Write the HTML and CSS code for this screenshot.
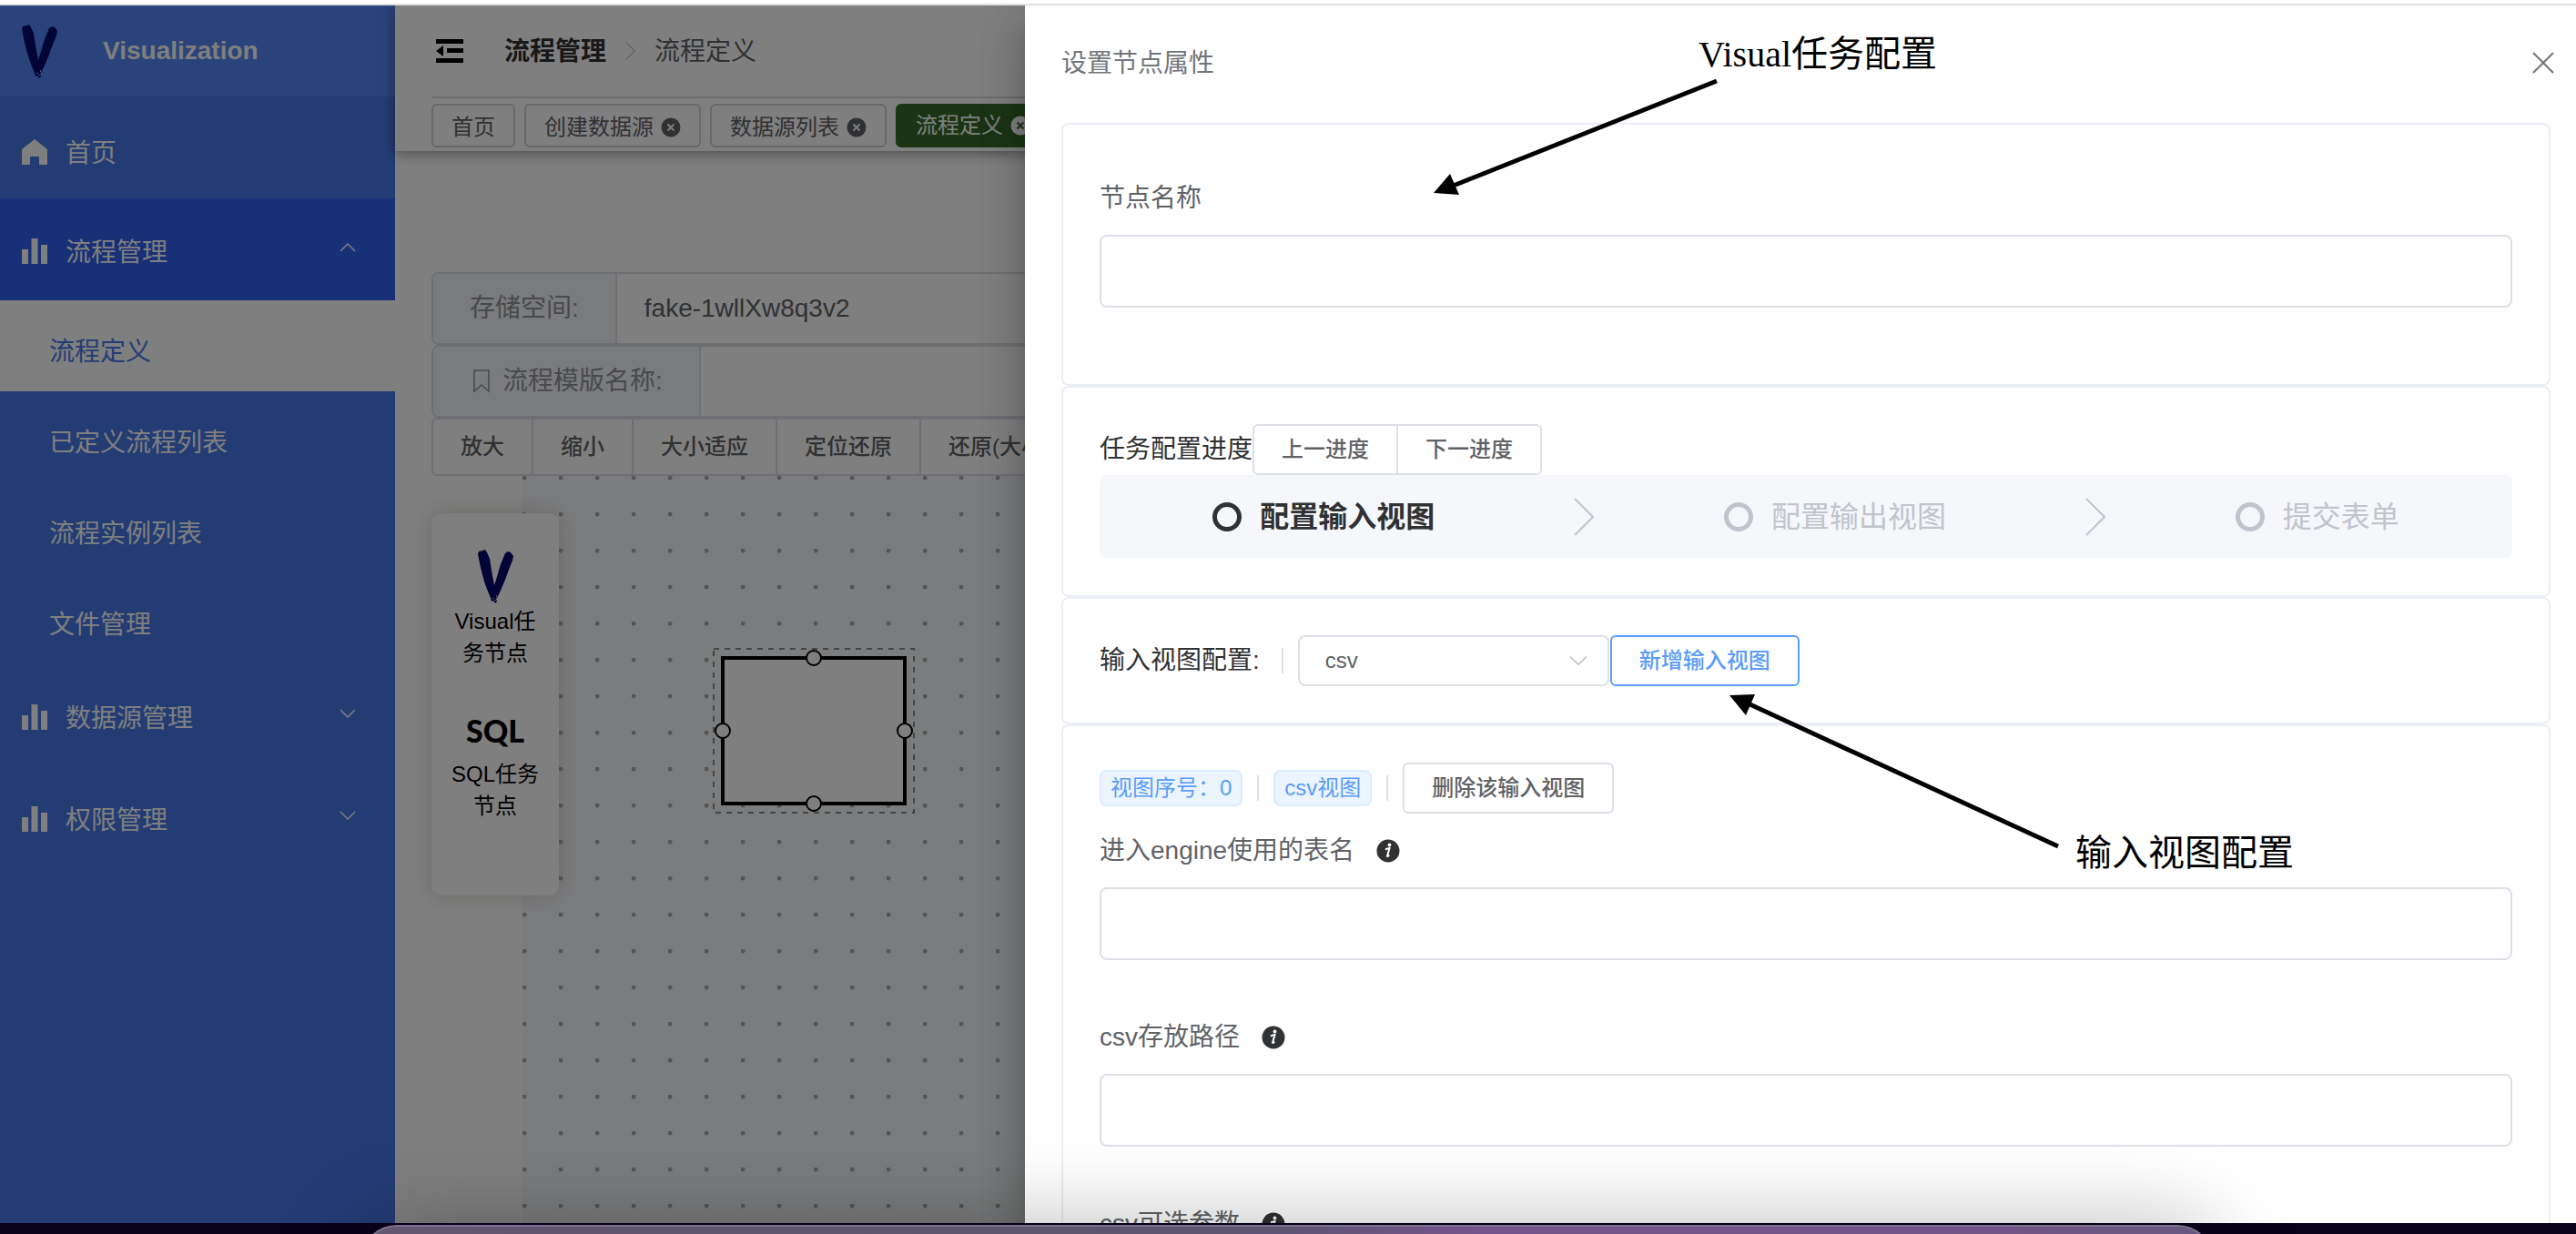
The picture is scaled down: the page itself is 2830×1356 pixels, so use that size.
FILE: index.html
```html
<!DOCTYPE html>
<html lang="zh-CN">
<head>
<meta charset="utf-8">
<title>Visualization</title>
<link rel="stylesheet" href="styles.css">
</head>
<body>
<svg class="sprite" aria-hidden="true">
  <symbol id="logo" viewBox="0 0 39 59"><path d="M0 5 1 2 5 1 8 0 10 3 13 10 15 23 18 39 20 33 25 16 30 4 33 2 36 3 39 7 38 12 34 22 30 33 25 45 22 51 20 54 21 57 19 59 17 56 15 57 14 53 11 46 7 35 3 20Z"/><path d="M16 53h2v1h-2zM20 50h1v2h-1zM18 55h2v1h-2z" fill="#fff" opacity=".6"/></symbol>
  <symbol id="bars" viewBox="0 0 28 28"><path d="M0 12h7v16H0zM10.500 0h7v28h-7zM21 7h7v21h-7z"/></symbol>
  <symbol id="up" viewBox="0 0 18 10"><path d="M1 9 9 1l8 8" fill="none" stroke="currentColor" stroke-width="1.500"/></symbol>
  <symbol id="down" viewBox="0 0 18 10"><path d="M1 1l8 8 8-8" fill="none" stroke="currentColor" stroke-width="1.500"/></symbol>
  <symbol id="next" viewBox="0 0 22 42"><path d="M1 1 21 21 1 41" fill="none" stroke="currentColor" stroke-width="2"/></symbol>
  <symbol id="clear" viewBox="0 0 22 22"><circle cx="11" cy="11" r="10.500" fill="currentColor"/><path d="M7.500 7.500l7 7M14.500 7.500l-7 7" stroke="var(--mark)" stroke-width="2"/></symbol>
  <symbol id="info" viewBox="0 0 26 26"><circle cx="13" cy="13" r="12.500" fill="#303133"/><circle cx="14.500" cy="6.500" r="1.900" fill="#fff"/><path d="M10 11.500c2-1 3.500-1.500 4.500-1.500l-2.300 8.300c-.3 1.300.6 1 2-.8" fill="none" stroke="#fff" stroke-width="2"/></symbol>
</svg>

<div class="screen">
<div class="window">
  <div class="app">
    <nav class="sidebar">
      <div class="brand"><svg class="logo"><use href="#logo"/></svg><span>Visualization</span></div>
      <a class="item home" href="#"><svg class="icon" viewBox="0 0 28 28"><path d="M14 0 28 11v17h-9v-9h-10v9H0V11z"/></svg><span>首页</span></a>
      <a class="item open" href="#"><svg class="icon"><use href="#bars"/></svg><span>流程管理</span><svg class="fold"><use href="#up"/></svg></a>
      <a class="sub current" href="#">流程定义</a>
      <a class="sub" href="#">已定义流程列表</a>
      <a class="sub" href="#">流程实例列表</a>
      <a class="sub" href="#">文件管理</a>
      <a class="item" href="#"><svg class="icon"><use href="#bars"/></svg><span>数据源管理</span><svg class="fold"><use href="#down"/></svg></a>
      <a class="item" href="#"><svg class="icon"><use href="#bars"/></svg><span>权限管理</span><svg class="fold"><use href="#down"/></svg></a>
    </nav>

    <main class="main">
      <header class="navbar">
        <div class="crumbs">
          <button class="toggle" aria-label="收起菜单"><svg viewBox="0 0 30 26"><path d="M0 0h30v5H0zM12 10h18v5H12zM0 21h30v5H0zM0 13 8 7v12z"/></svg></button>
          <a class="parent" href="#">流程管理</a>
          <svg class="crumb-sep"><use href="#next"/></svg>
          <span>流程定义</span>
        </div>
        <div class="tabs">
          <a class="tab" href="#">首页</a>
          <a class="tab" href="#">创建数据源<svg><use href="#clear"/></svg></a>
          <a class="tab" href="#">数据源列表<svg><use href="#clear"/></svg></a>
          <a class="tab active" href="#">流程定义<svg><use href="#clear"/></svg></a>
        </div>
      </header>

      <div class="tools">
        <div class="group"><label for="space">存储空间:</label><input id="space" type="text" value="fake-1wllXw8q3v2"></div>
        <div class="group"><label for="tpl"><svg viewBox="0 0 18 26"><path d="M1 1h16v23l-8-7-8 7z" fill="none" stroke="currentColor" stroke-width="1.500"/></svg>流程模版名称:</label><input id="tpl" type="text"></div>
        <div class="buttons large"><button>放大</button><button>缩小</button><button>大小适应</button><button>定位还原</button><button>还原(大小&amp;定位)</button></div>
      </div>

      <div class="board">
        <div class="canvas">
          <svg class="node" width="224" height="184" viewBox="0 0 224 184">
            <rect x="2" y="2" width="220" height="180" fill="none" stroke="#888" stroke-width="2" stroke-dasharray="6 6"/>
            <rect x="12" y="12" width="200" height="160" fill="#fff" stroke="#000" stroke-width="4"/>
            <g fill="#fff" stroke="#000" stroke-width="2"><circle cx="112" cy="12" r="8"/><circle cx="212" cy="92" r="8"/><circle cx="112" cy="172" r="8"/><circle cx="12" cy="92" r="8"/></g>
          </svg>
        </div>
        <aside class="palette">
          <div class="entry"><svg class="logo"><use href="#logo"/></svg><p>Visual任务节点</p></div>
          <div class="entry"><b class="sql">SQL</b><p>SQL任务节点</p></div>
        </aside>
      </div>
    </main>
  </div>

  <div class="overlay"></div>

  <section class="drawer" role="dialog" aria-label="设置节点属性">
    <header class="drawer-head"><h2>设置节点属性</h2><button aria-label="关闭"><svg viewBox="0 0 24 24"><path d="M1 1l22 22M23 1 1 23" stroke="currentColor" stroke-width="2"/></svg></button></header>
    <div class="cards">
      <div class="card">
        <div class="field"><label for="name">节点名称</label><input id="name" type="text"></div>
      </div>
      <div class="card">
        <div class="row"><span class="caption">任务配置进度</span><div class="buttons"><button>上一进度</button><button>下一进度</button></div></div>
        <ol class="steps">
          <li class="on"><i></i><span>配置输入视图</span><svg><use href="#next"/></svg></li>
          <li><i></i><span>配置输出视图</span><svg><use href="#next"/></svg></li>
          <li><i></i><span>提交表单</span></li>
        </ol>
      </div>
      <div class="card">
        <div class="row">
          <label class="caption" for="kind">输入视图配置:</label><hr>
          <div class="select"><select id="kind"><option>csv</option></select><svg><use href="#down"/></svg></div>
          <button class="primary">新增输入视图</button>
        </div>
      </div>
      <div class="card">
        <div class="row"><span class="tag">视图序号：0</span><hr><span class="tag">csv视图</span><hr><button>删除该输入视图</button></div>
        <div class="field"><label for="table">进入engine使用的表名<svg><use href="#info"/></svg></label><input id="table" type="text"></div>
        <div class="field"><label for="path">csv存放路径<svg><use href="#info"/></svg></label><input id="path" type="text"></div>
        <div class="field"><label for="opts">csv可选参数<svg><use href="#info"/></svg></label><input id="opts" type="text"></div>
      </div>
    </div>
    <svg class="notes" width="1704" height="1338" viewBox="0 0 1704 1338">
      <g stroke="#000" stroke-width="5"><path d="M760 83 468 199"/><path d="M1135 924 790 765"/></g>
      <path d="M449 206 467 185 477 208zM774 758 802 757 792 780z"/>
      <text x="740" y="67">Visual任务配置</text>
      <text x="1154" y="945">输入视图配置</text>
    </svg>
  </section>
</div>
<footer class="desktop"><div class="dock"></div></footer>
</div>
</body>
</html>
```
FILE: styles.css
```css
* { box-sizing: border-box; }
body {
  margin: 0;
  background: #fff;
  font: 28px/1 "Liberation Sans", "Noto Sans CJK SC", sans-serif;
  color: #303133;
}
a { color: inherit; text-decoration: none; }
button, input, select { font: inherit; color: inherit; }
svg { display: block; flex: none; fill: currentColor; }
.sprite { position: absolute; width: 0; height: 0; }

.screen { position: relative; display: flex; flex-direction: column; height: 100vh; overflow: hidden; }
.window {
  position: relative;
  flex: 1;
  min-height: 0;
  margin-top: 4px;
  border-top: 2px solid #e0e0e0;
  overflow: hidden;
}
.app { display: flex; height: 100%; }

/* sidebar */
.sidebar { width: 434px; flex: none; background: #4678e8; color: #fff; }
.brand { display: flex; align-items: center; gap: 50px; height: 100px; padding-left: 24px; background: #5488f6; font-weight: bold; }
.logo { width: 39px; height: 59px; color: #06086c; }
.item { display: flex; align-items: center; gap: 20px; height: 112px; padding: 4px 43px 0 24px; }
.item .icon { width: 28px; height: 28px; }
.item span { padding-top: 4px; }
.item.home { padding-top: 10px; }
.item.open { background: #2e60f0; }
.fold { width: 18px; height: 10px; margin: 0 0 8px auto; }
.sub { display: flex; align-items: center; height: 100px; padding: 14px 0 0 54px; }
.sub.current { background: #fff; color: #4678e8; }

/* top bar */
.main { flex: 1; min-width: 0; display: flex; flex-direction: column; background: #fff; }
.navbar { height: 160px; padding-left: 40px; box-shadow: 0 2px 14px rgba(0, 0, 0, .45); }
.crumbs { display: flex; align-items: center; height: 102px; padding-left: 5px; border-bottom: 2px solid #d8d8d8; color: #606266; }
.crumbs span, .parent { padding-top: 2px; }
.toggle { width: 30px; padding: 0; border: 0; background: none; color: #000; }
.toggle svg { width: 30px; height: 26px; }
.parent { margin-left: 45px; font-weight: bold; color: #303133; }
.crumb-sep { width: 11px; height: 20px; margin: 0 21px; color: #909399; }
.tabs { display: flex; gap: 10px; padding-top: 6px; white-space: nowrap; font-size: 24px; color: #606266; }
.tab { --mark: #fff; display: flex; align-items: center; gap: 8px; height: 48px; padding: 4px 20px 0; border: 2px solid #d0d0d0; border-radius: 6px; }
.tab svg { width: 22px; height: 22px; }
.tab.active { --mark: #366b29; padding-top: 0; border-color: #366b29; background: #366b29; color: #fff; }

/* form rows over the canvas */
.tools { padding: 133px 0 0 40px; white-space: nowrap; overflow: hidden; }
.group { display: flex; height: 80px; border: 2px solid #dcdfe6; border-radius: 8px 0 0 8px; }
.group label { display: flex; align-items: center; gap: 14px; padding: 0 40px; border-right: 2px solid #dcdfe6; background: #f5f7fa; color: #909399; border-radius: 6px 0 0 6px; }
.group label svg { width: 18px; height: 26px; margin-left: 4px; }
.group input { flex: 1; min-width: 0; padding: 0 30px; border: 0; background: none; color: #606266; }

button { cursor: pointer; }
.buttons button, .row > button {
  height: 56px;
  padding: 0 30px;
  border: 2px solid #dcdfe6;
  border-radius: 6px;
  background: #fff;
  color: #606266;
  font-size: 24px;
  font-weight: 500;
}
.buttons { display: flex; }
.buttons button + button { margin-left: -2px; border-radius: 0; }
.buttons button:first-child { border-radius: 6px 0 0 6px; }
.buttons button:last-child { border-radius: 0 6px 6px 0; }
.buttons.large button { height: 64px; }

/* canvas */
.board { position: relative; flex: 1; min-height: 0; padding-left: 140px; }
.canvas { position: relative; height: 100%; background: radial-gradient(circle at 2px 2px, #a8a8a8 2px, transparent 3px) 0 0 / 40px 40px #f6f8fb; }
.node { position: absolute; left: 208px; top: 188px; }
.palette { position: absolute; left: 40px; top: 41px; width: 140px; height: 420px; padding-top: 40px; border-radius: 12px; background: #fff; box-shadow: 0 0 24px rgba(120, 110, 90, .3); color: #000; text-align: center; }
.entry { display: flex; flex-direction: column; align-items: center; height: 180px; }
.entry p { width: 100px; margin: 2px 0 0; font-size: 24px; line-height: 35px; }
.sql { height: 47px; font: 900 34px/38px Lato, "Liberation Sans", sans-serif; }

/* drawer */
.overlay { position: absolute; inset: 0; background: rgba(0, 0, 0, .5); }
.drawer {
  position: absolute;
  top: 0;
  right: 0;
  bottom: 0;
  width: calc(60% + 6px);
  display: flex;
  flex-direction: column;
  background: #fff;
  box-shadow: 0 16px 20px -10px rgba(0, 0, 0, .2), 0 32px 48px 4px rgba(0, 0, 0, .14), 0 12px 48px 6px rgba(0, 0, 0, .12);
}
.drawer-head { display: flex; align-items: center; justify-content: space-between; height: 129px; padding: 0 24px 4px 40px; color: #72767b; }
.drawer-head h2 { margin: 0; padding-top: 2px; font-size: 28px; font-weight: normal; }
.drawer-head button { padding: 0; border: 0; background: none; }
.drawer-head svg { width: 24px; height: 24px; }
.cards { flex: 1; min-height: 0; padding: 0 28px 0 40px; overflow-y: auto; scrollbar-width: none; }
.card { padding: 40px; border: 2px solid #ebeef5; border-radius: 8px; }
.row { display: flex; align-items: center; height: 56px; white-space: nowrap; }
.caption { color: #303133; }
.row hr { width: 2px; height: 28px; margin: 0 16px; border: 0; background: #dcdfe6; }
.caption + hr { margin-left: 24px; }
.row > .primary { border-color: #5a9cf8; color: #5a9cf8; }
.select { position: relative; width: 342px; margin-right: 1px; font-size: 24px; color: #606266; }
.select select { display: block; width: 100%; height: 56px; padding: 0 28px; border: 2px solid #dcdfe6; border-radius: 8px; background: #fff; appearance: none; }
.select svg { position: absolute; right: 24px; top: 22px; width: 20px; height: 12px; color: #c0c4cc; pointer-events: none; }
.tag { height: 40px; padding: 0 10px; border: 2px solid #d9ecff; border-radius: 8px; background: #ecf5ff; color: #5a9cf8; font-size: 24px; line-height: 36px; }
.field { margin-bottom: 44px; }
.field label { display: flex; align-items: center; gap: 24px; height: 81px; color: #606266; }
.field label svg { width: 26px; height: 26px; }
.field input { display: block; width: 100%; height: 80px; padding: 0 28px; border: 2px solid #dcdfe6; border-radius: 8px; background: #fff; }

.steps { display: flex; margin: 0; padding: 0 8%; list-style: none; height: 92px; border-radius: 8px; background: #f5f7fa; color: #c0c4cc; font-size: 32px; white-space: nowrap; }
.steps li { display: flex; align-items: center; gap: 20px; flex: 1; padding-right: 10px; }
.steps li:last-child { flex: none; padding-right: 0; }
.steps i { width: 32px; height: 32px; border: 5px solid currentColor; border-radius: 50%; }
.steps svg { width: 22px; height: 42px; margin: 0 auto; color: #c0c4cc; }
.steps .on { color: #303133; font-weight: bold; }

.notes { position: absolute; left: 0; top: 0; pointer-events: none; fill: #000; font: 40px "Liberation Serif", "Noto Sans CJK SC", serif; }

/* desktop strip and dock */
.desktop { position: relative; flex: none; height: 12px; padding: 2px 398px 0 396px; background: #07011a; }
.dock { height: 90px; border: 2px solid #7c7090; border-radius: 40px; background: linear-gradient(90deg, #625870, #5c566e 35%, #5e5474 50%, #74548a 60%, #745488 85%, #675880); box-shadow: 0 0 96px rgba(0, 0, 0, .28); }
```
